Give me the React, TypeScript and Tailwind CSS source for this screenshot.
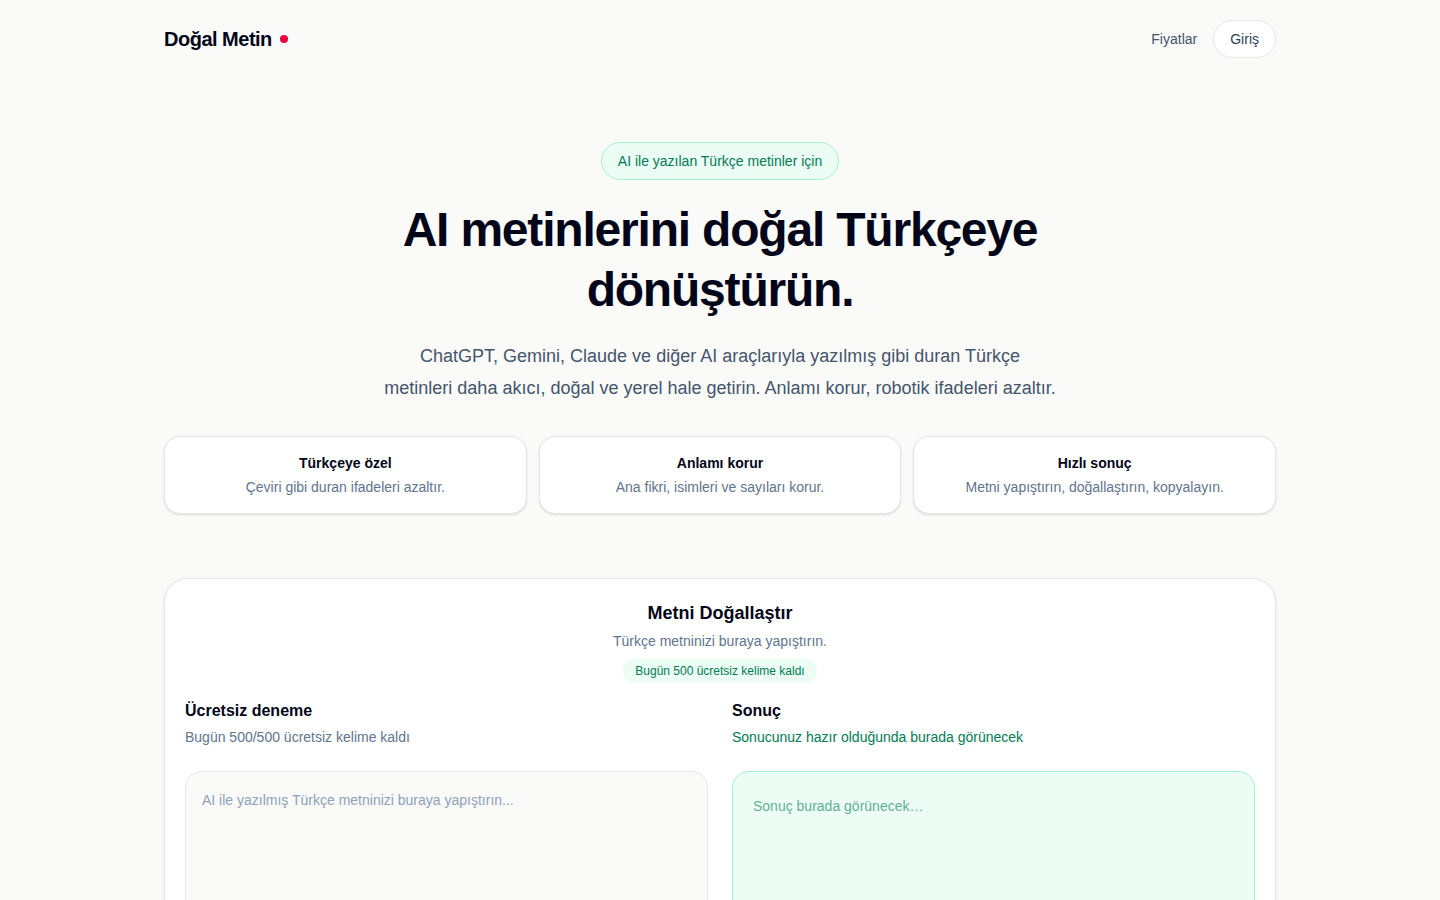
import React, { useState } from "react";

const features = [
  { title: "Türkçeye özel", desc: "Çeviri gibi duran ifadeleri azaltır." },
  { title: "Anlamı korur", desc: "Ana fikri, isimleri ve sayıları korur." },
  { title: "Hızlı sonuç", desc: "Metni yapıştırın, doğallaştırın, kopyalayın." },
];

const Header: React.FC = () => (
  <header className="mx-auto flex max-w-[1112px] items-center justify-between py-5">
    <div className="flex items-center">
      <span className="text-xl font-bold tracking-tight text-slate-950">Doğal Metin</span>
      <span className="ml-2 h-2 w-2 rounded-full bg-rose-600" />
    </div>
    <nav className="flex items-center gap-4">
      <a className="text-sm text-slate-600">Fiyatlar</a>
      <button className="rounded-full border border-gray-200 bg-white px-4 py-2 text-sm text-slate-700">
        Giriş
      </button>
    </nav>
  </header>
);

const Hero: React.FC = () => (
  <section className="mx-auto flex max-w-[1112px] flex-col items-center pt-16 text-center">
    <span className="rounded-full border border-emerald-200 bg-emerald-50 px-4 py-2 text-sm text-emerald-700">
      AI ile yazılan Türkçe metinler için
    </span>
    <h1 className="mt-5 max-w-3xl text-5xl font-bold leading-[60px] tracking-tight text-slate-950">
      AI metinlerini doğal Türkçeye dönüştürün.
    </h1>
    <p className="mt-5 max-w-2xl text-lg leading-8 text-slate-600">
      ChatGPT, Gemini, Claude ve diğer AI araçlarıyla yazılmış gibi duran Türkçe metinleri daha akıcı, doğal ve
      yerel hale getirin. Anlamı korur, robotik ifadeleri azaltır.
    </p>
    <div className="mt-8 grid w-full grid-cols-3 gap-3">
      {features.map((f) => (
        <div key={f.title} className="rounded-2xl border border-gray-200 bg-white py-4 shadow-sm">
          <div className="text-sm font-semibold text-slate-950">{f.title}</div>
          <div className="mt-1 text-sm text-slate-500">{f.desc}</div>
        </div>
      ))}
    </div>
  </section>
);

const Editor: React.FC = () => {
  const [text, setText] = useState("");

  return (
    <section className="mx-auto mt-16 max-w-[1112px] pb-16">
      <div className="rounded-3xl border border-gray-200 bg-white p-5 shadow-sm">
        <div className="flex flex-col items-center text-center">
          <h2 className="text-lg font-semibold text-slate-950">Metni Doğallaştır</h2>
          <p className="mt-1 text-sm text-slate-500">Türkçe metninizi buraya yapıştırın.</p>
          <span className="mt-2 rounded-full bg-emerald-50 px-3 py-1 text-xs text-emerald-700">
            Bugün 500 ücretsiz kelime kaldı
          </span>
        </div>
        <div className="mt-4 grid grid-cols-2 gap-6">
          <div>
            <h3 className="text-base font-semibold text-slate-950">Ücretsiz deneme</h3>
            <p className="mt-1 text-sm text-slate-500">Bugün 500/500 ücretsiz kelime kaldı</p>
            <textarea
              value={text}
              onChange={(e) => setText(e.target.value)}
              placeholder="AI ile yazılmış Türkçe metninizi buraya yapıştırın..."
              className="mt-6 block h-72 w-full resize-none rounded-2xl border border-gray-200 bg-[#fafaf9] p-4 text-sm leading-6 text-slate-800 outline-none placeholder:text-slate-400"
            />
          </div>
          <div>
            <h3 className="text-base font-semibold text-slate-950">Sonuç</h3>
            <p className="mt-1 text-sm text-emerald-700">Sonucunuz hazır olduğunda burada görünecek</p>
            <div className="mt-6 h-72 rounded-2xl border border-emerald-200 bg-emerald-50 p-5 text-sm leading-7 text-emerald-700/60">
              Sonuç burada görünecek…
            </div>
          </div>
        </div>
      </div>
    </section>
  );
};

const App: React.FC = () => (
  <div className="min-h-screen bg-[#fafaf9] font-['Liberation_Sans',Arial,sans-serif] text-slate-950">
    <Header />
    <Hero />
    <Editor />
  </div>
);

export default App;
